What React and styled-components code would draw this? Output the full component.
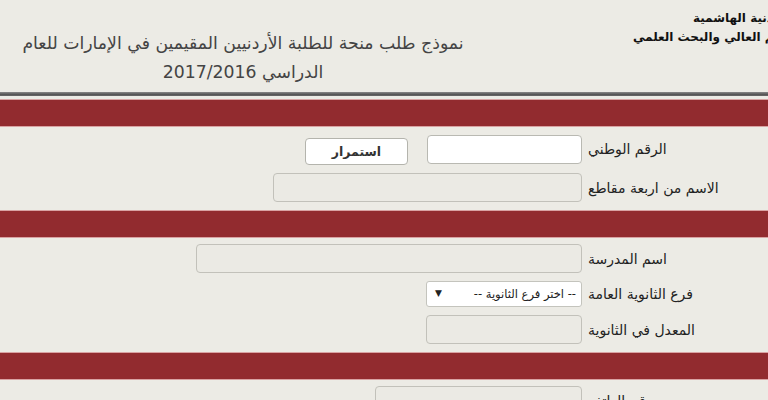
import React from "react";
import styled, { createGlobalStyle } from "styled-components";

const GlobalStyle = createGlobalStyle`
  html, body {
    margin: 0;
    padding: 0;
    background: #ecebe5;
    overflow: hidden;
  }
`;

function App() {
  return (
    <>
      <GlobalStyle />
      <Page>
        <Header>
          <Ministry>
            <div>المملكة الأردنية الهاشمية</div>
            <div>وزارة التعليم العالي والبحث العلمي</div>
          </Ministry>
          <Title>
            <div>نموذج طلب منحة للطلبة الأردنيين المقيمين في الإمارات للعام</div>
            <div>الدراسي 2017/2016</div>
          </Title>
        </Header>
        <Rule />

        <Band />
        <Fields>
          <Row>
            <Label>الرقم الوطني</Label>
            <Controls>
              <Input type="text" $width={155} />
              <Button>استمرار</Button>
            </Controls>
          </Row>
          <Row>
            <Label>الاسم من اربعة مقاطع</Label>
            <Controls>
              <Input type="text" disabled $width={309} />
            </Controls>
          </Row>
        </Fields>

        <Band />
        <Fields>
          <Row>
            <Label>اسم المدرسة</Label>
            <Controls>
              <Input type="text" disabled $width={386} />
            </Controls>
          </Row>
          <Row>
            <Label>فرع الثانوية العامة</Label>
            <Controls>
              <SelectBox>
                <span>-- اختر فرع الثانوية --</span>
                <Arrow>▼</Arrow>
              </SelectBox>
            </Controls>
          </Row>
          <Row>
            <Label>المعدل في الثانوية</Label>
            <Controls>
              <Input type="text" disabled $width={156} />
            </Controls>
          </Row>
        </Fields>

        <Band />
        <Fields>
          <Row>
            <Label>رقم الهاتف</Label>
            <Controls>
              <Input type="text" disabled $width={207} />
            </Controls>
          </Row>
        </Fields>
      </Page>
    </>
  );
}

const Page = styled.div`
  width: 860px;
  direction: rtl;
  font-family: "DejaVu Sans", sans-serif;
  color: #222;
`;

const Header = styled.header`
  height: 92px;
  display: flex;
  justify-content: space-between;
  align-items: flex-start;
`;

const Ministry = styled.div`
  padding: 9px 19px 0 0;
  font-size: 12px;
  font-weight: bold;
  line-height: 19px;
  color: #111;
`;

const Title = styled.div`
  width: 486px;
  padding-top: 29px;
  text-align: center;
  font-size: 17.3px;
  line-height: 29px;
  color: #444;
`;

const Rule = styled.div`
  height: 4px;
  margin-bottom: 3px;
  background: linear-gradient(#8a8a8a, #555 60%, #6a6a6a);
`;

const Band = styled.div`
  height: 26px;
  background: #922b2f;
  border-top: 1px solid #d9a3a3;
  border-bottom: 1px solid #d9a3a3;
`;

const Fields = styled.div`
  display: flex;
  flex-direction: column;
  gap: 8px;
  padding: 6px 0 8px;
`;

const Row = styled.div`
  display: grid;
  grid-template-columns: 272px 1fr;
  align-items: center;
`;

const Label = styled.label`
  text-align: left;
  font-size: 14px;
  color: #222;
`;

const Controls = styled.div`
  display: flex;
  align-items: center;
  gap: 19px;
  padding-right: 6px;
`;

const Input = styled.input`
  box-sizing: border-box;
  width: ${(p) => p.$width}px;
  height: 29px;
  border: 1px solid #b9b9b2;
  border-radius: 4px;
  background: #fff;
  font: inherit;
  &:disabled {
    background: #ebeae4;
    border-color: #c2c1ba;
  }
`;

const Button = styled.button`
  box-sizing: border-box;
  width: 103px;
  height: 27px;
  border: 1px solid #b4b4ad;
  border-radius: 4px;
  background: #fff;
  font-family: inherit;
  font-size: 12.5px;
  font-weight: bold;
  color: #333;
  margin-top: 5px;
`;

const SelectBox = styled.div`
  position: relative;
  box-sizing: border-box;
  width: 156px;
  height: 26px;
  display: flex;
  align-items: center;
  padding-right: 5px;
  border: 1px solid #c4c4bd;
  border-radius: 3px;
  background: #fff;
  font-size: 11.5px;
  color: #222;
`;

const Arrow = styled.span`
  position: absolute;
  left: 8px;
  top: 6px;
  font-size: 9px;
`;

export default App;
